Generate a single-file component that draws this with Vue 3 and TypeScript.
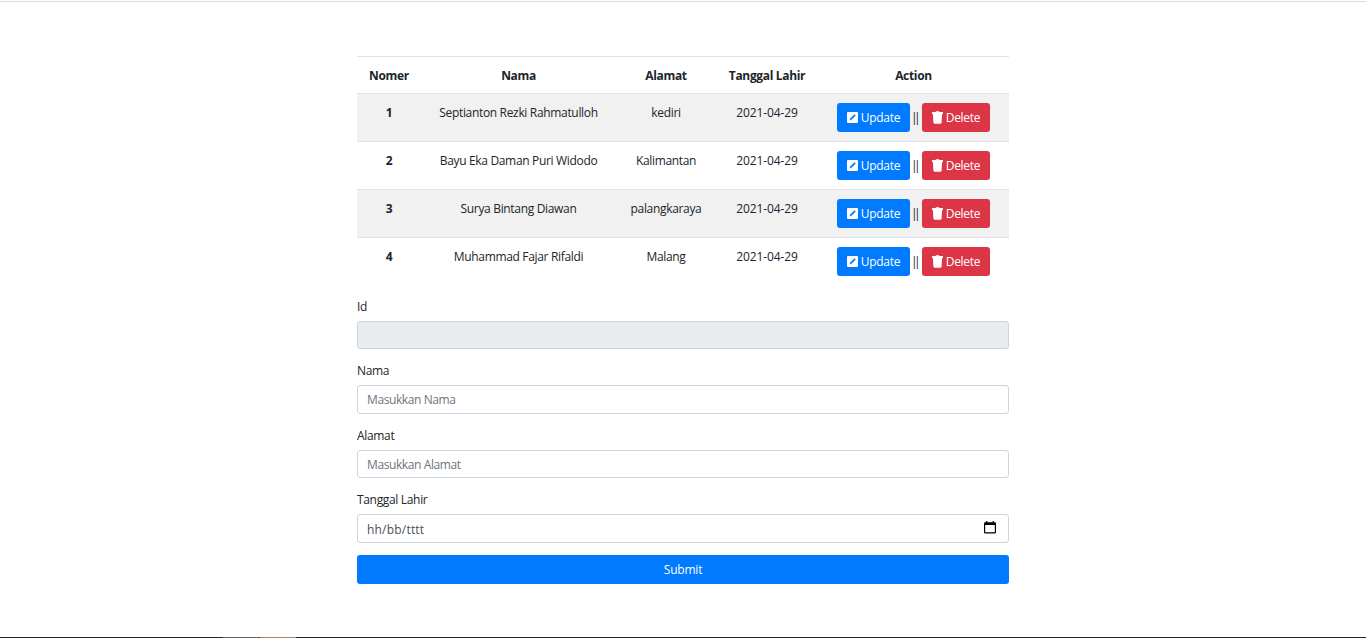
<script setup lang="ts">
import { ref } from 'vue'

interface Person {
  id: number
  nama: string
  alamat: string
  lahir: string
}

const people = ref<Person[]>([
  { id: 1, nama: 'Septianton Rezki Rahmatulloh', alamat: 'kediri', lahir: '2021-04-29' },
  { id: 2, nama: 'Bayu Eka Daman Puri Widodo', alamat: 'Kalimantan', lahir: '2021-04-29' },
  { id: 3, nama: 'Surya Bintang Diawan', alamat: 'palangkaraya', lahir: '2021-04-29' },
  { id: 4, nama: 'Muhammad Fajar Rifaldi', alamat: 'Malang', lahir: '2021-04-29' },
])
</script>

<template>
  <div class="page">
    <main class="container">
      <table class="table">
        <colgroup>
          <col class="c-no" /><col class="c-nama" /><col class="c-alamat" /><col class="c-lahir" /><col class="c-action" />
        </colgroup>
        <thead>
          <tr><th>Nomer</th><th>Nama</th><th>Alamat</th><th>Tanggal Lahir</th><th>Action</th></tr>
        </thead>
        <tbody>
          <tr v-for="p in people" :key="p.id">
            <th>{{ p.id }}</th>
            <td>{{ p.nama }}</td>
            <td>{{ p.alamat }}</td>
            <td class="date">{{ p.lahir }}</td>
            <td>
              <div class="actions">
                <button type="button" class="btn primary update">
                  <svg class="i-edit" viewBox="0 0 11 11"><rect width="11" height="11" rx="1" fill="#fff" /><path fill="#007bff" d="M7.400 2.300 3.200 6.500 2.600 8.400 4.500 7.800 8.700 3.600z" /></svg>
                  <span>Update</span>
                </button>
                <span class="sep">||</span>
                <button type="button" class="btn danger delete">
                  <svg class="i-trash" viewBox="0 0 11 13"><path fill="#fff" d="M.4 1.100h3.100L4 .3h3l.5.8h3.100q.4 0 .4.4V3H0V1.500q0-.4.4-.4zM.9 3h9.200l-.5 8.600q-.1 1.100-1.200 1.100H2.600q-1.100 0-1.200-1.100z" /></svg>
                  <span>Delete</span>
                </button>
              </div>
            </td>
          </tr>
        </tbody>
      </table>

      <form class="form" @submit.prevent>
        <div class="group"><label for="id">Id</label><input id="id" type="text" disabled /></div>
        <div class="group"><label for="nama">Nama</label><input id="nama" type="text" placeholder="Masukkan Nama" /></div>
        <div class="group"><label for="alamat">Alamat</label><input id="alamat" type="text" placeholder="Masukkan Alamat" /></div>
        <div class="group">
          <label for="lahir">Tanggal Lahir</label>
          <div class="field">
            <span>hh/bb/tttt</span>
            <svg class="i-cal" viewBox="0 0 12 13"><path fill="#000" fill-rule="evenodd" d="M2 0h1.300v1.200h5.400V0H10v1.200h.8q1.200 0 1.200 1.200v8.900q0 1.200-1.200 1.200H1.200Q0 12.500 0 11.300V2.400Q0 1.200 1.200 1.200H2zM1.200 4v7.300h9.600V4z" /></svg>
          </div>
        </div>
        <button type="submit" class="btn primary submit">Submit</button>
      </form>
    </main>
    <footer class="strip"><i class="grey"></i><i class="tan"></i></footer>
  </div>
</template>

<style>
body { margin: 0; background: #fff; overflow: hidden; }
</style>

<style scoped>
* { box-sizing: border-box; }
.page {
  height: 638px;
  padding-top: 1px;
  display: flex;
  flex-direction: column;
  font-family: "Open Sans", "Noto Sans", sans-serif;
  font-size: 12px;
  line-height: 19px;
  letter-spacing: -0.33px;
  color: #212529;
}
.page::before { content: ""; height: 1px; flex: none; background: #dcdddf; }
.container { width: 652px; margin: 54px auto 0; flex: 1; }
.table { width: 652px; table-layout: fixed; border-collapse: separate; border-spacing: 0; text-align: center; }
.c-no { width: 64px; }
.c-nama { width: 195px; }
.c-alamat { width: 100px; }
.c-lahir { width: 102px; }
.c-action { width: 191px; }
th, td { padding: 9px 0 0; border-top: 1px solid #dee2e6; vertical-align: top; }
th { font-weight: 700; letter-spacing: -0.33px; }
.date { letter-spacing: -0.12px; }
thead th { height: 37px; }
tbody th, tbody td { height: 48px; }
tbody tr:nth-child(odd) { background: #f1f1f1; }
.actions { display: flex; align-items: center; justify-content: center; }
.sep { width: 12px; padding-left: 1px; letter-spacing: -3.6px; text-align: left; }
.btn {
  height: 29px;
  padding: 0;
  border: 0;
  border-radius: 3px;
  color: #fff;
  font: inherit;
  letter-spacing: -0.28px;
  display: flex;
  align-items: center;
  justify-content: center;
}
.primary { background: #007bff; }
.danger { background: #dc3545; }
.update { width: 73px; gap: 3px; }
.delete { width: 68px; gap: 3px; }
.i-edit { width: 11px; height: 11px; }
.i-trash { width: 11px; height: 13px; }
.form { margin-top: 12px; }
.group { margin-bottom: 12px; }
label { display: block; height: 20px; line-height: 20px; margin-bottom: 4px; letter-spacing: -0.33px; }
input, .field {
  display: flex;
  align-items: center;
  width: 100%;
  height: 28.4px;
  padding: 0.5px 9px 0;
  border: 1px solid #ced4da;
  border-radius: 3px;
  background: #fff;
  color: #495057;
  font: inherit;
  letter-spacing: -0.4px;
}
input::placeholder { color: #6c757d; opacity: 1; }
input:disabled { background: #e9ecef; }
.field { justify-content: space-between; padding: 2px 12px 0 9px; letter-spacing: 0.2px; }
.i-cal { width: 12px; height: 13px; margin-top: -4px; }
.submit { width: 100%; letter-spacing: -0.2px; }
.strip { height: 1px; flex: none; display: flex; padding-left: 223px; background: #24282b; }
.grey { width: 36px; margin-right: 1px; background: #62686c; }
.tan { width: 36px; background: #a98565; }
</style>
